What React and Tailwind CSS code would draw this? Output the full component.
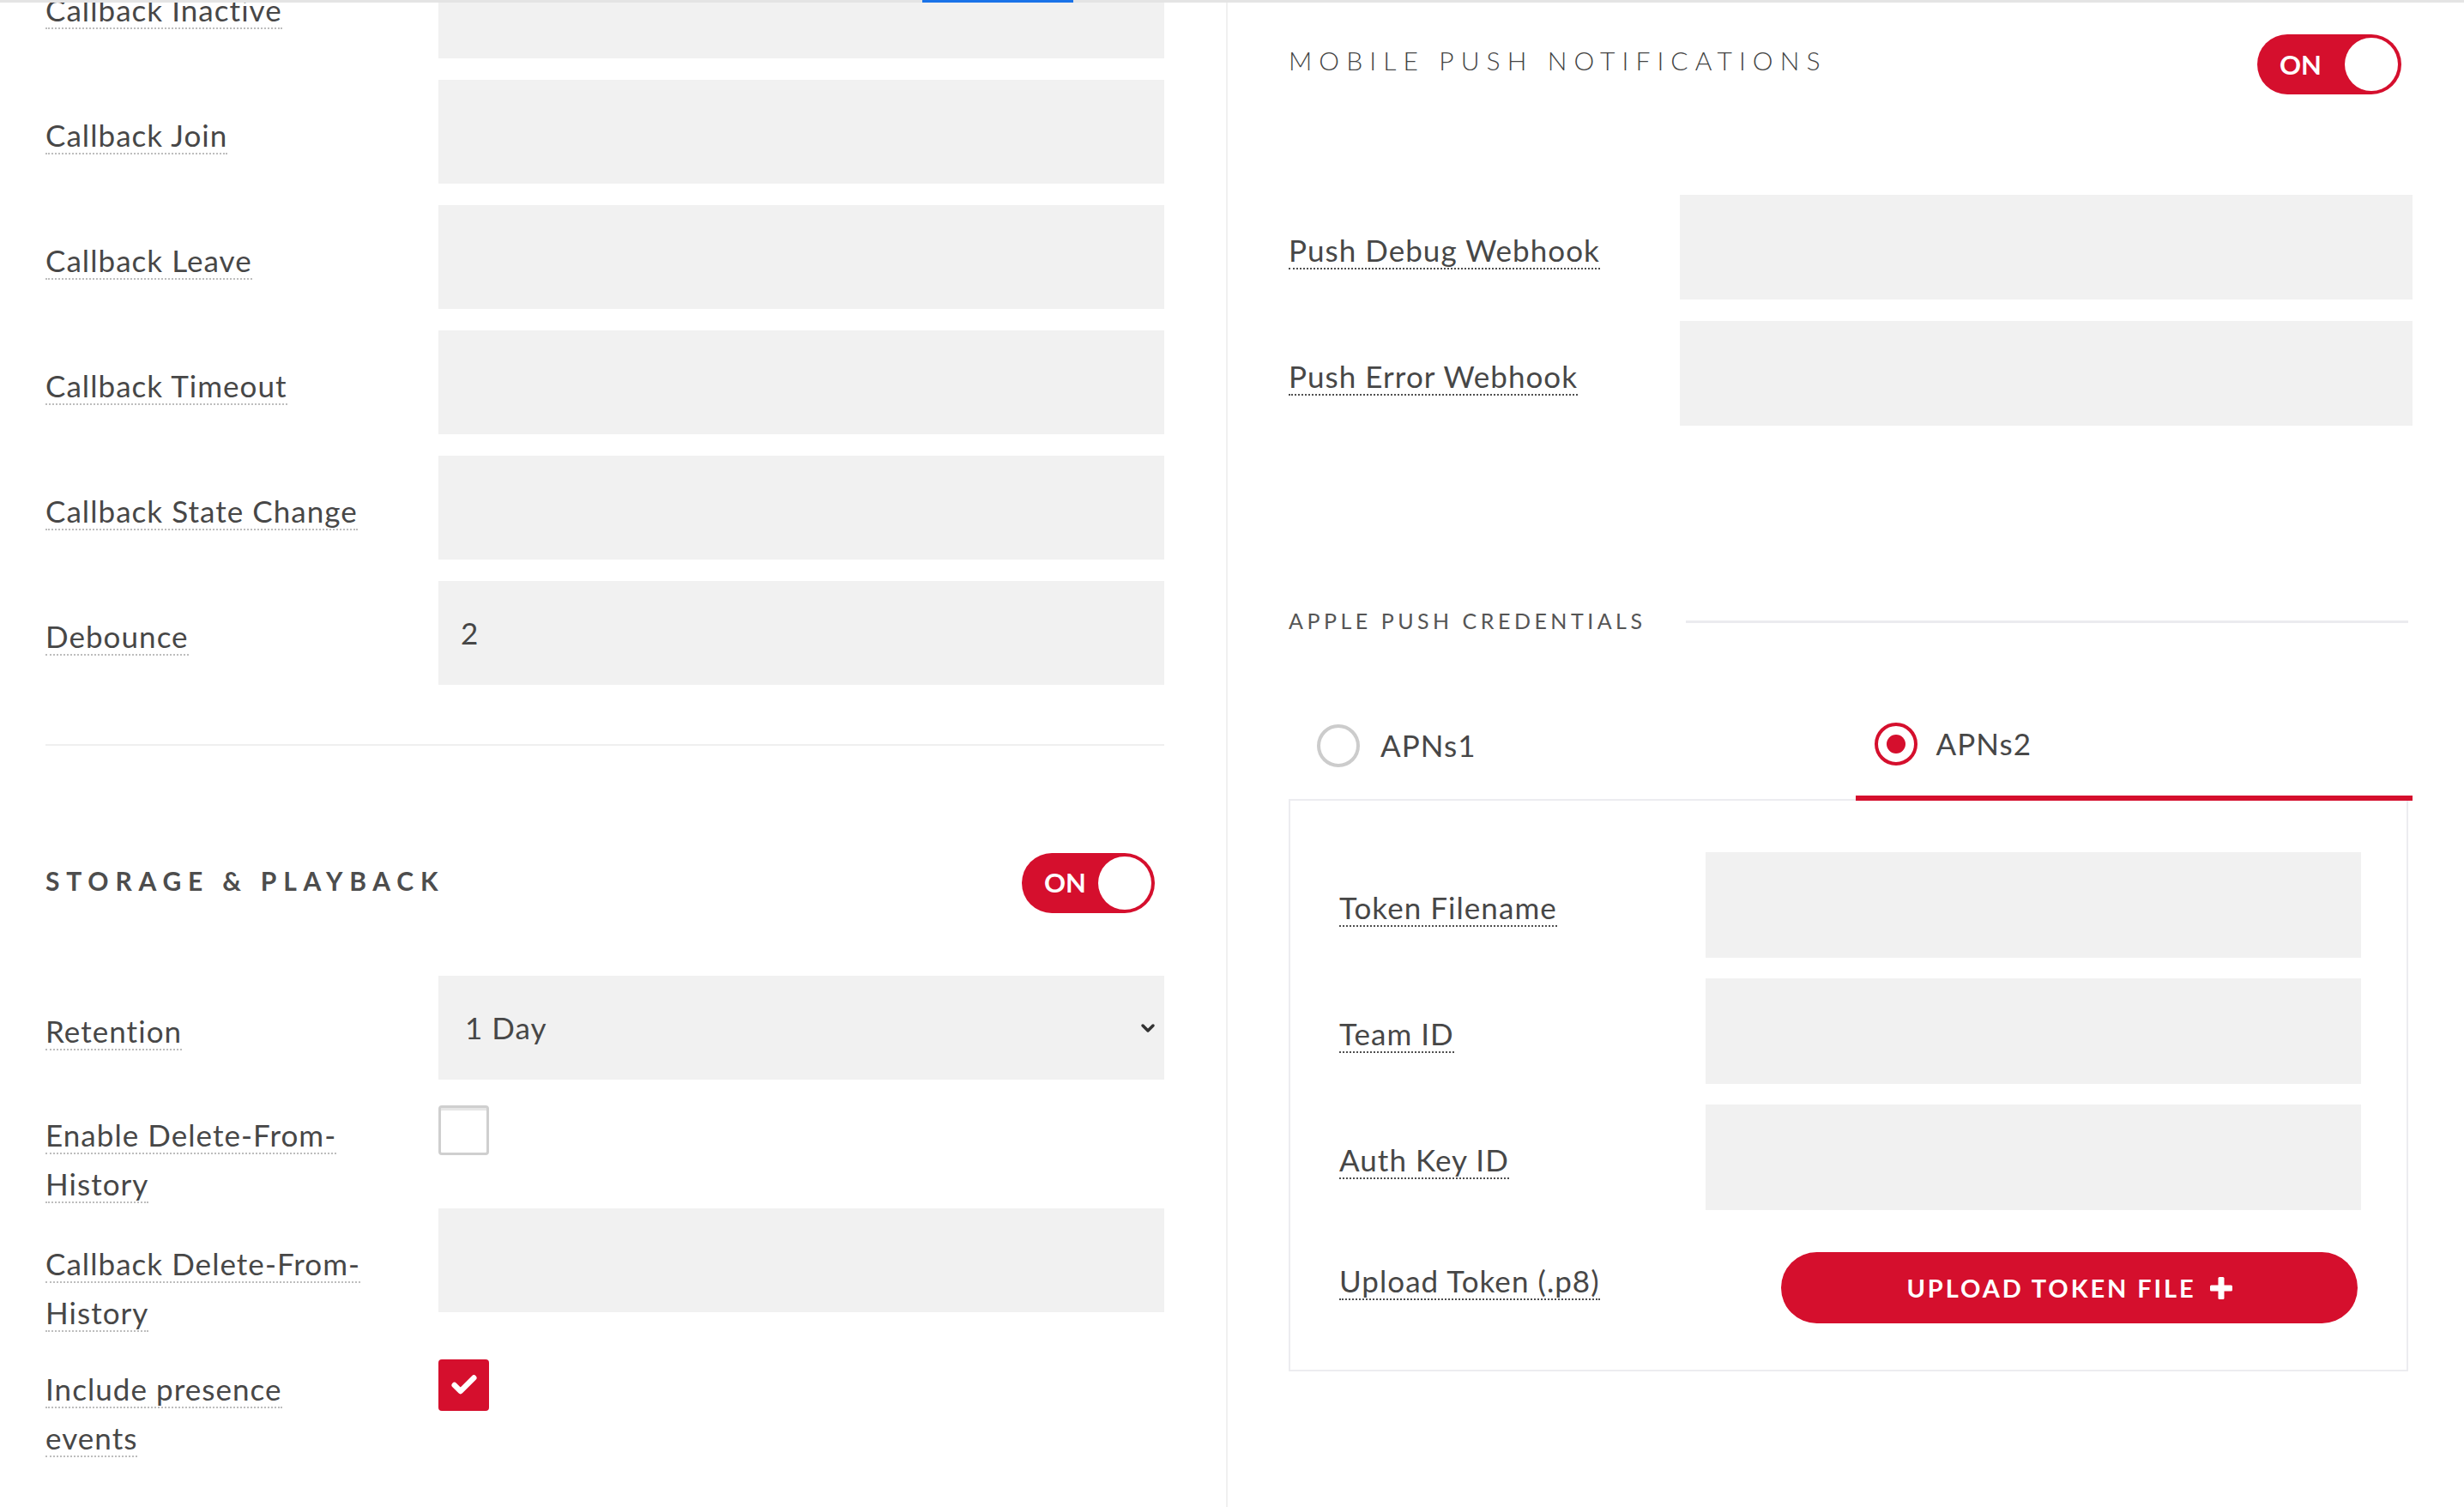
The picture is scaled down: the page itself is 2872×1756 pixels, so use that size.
import React from "react";
import { Check, ChevronDown } from "lucide-react";

const RED = "bg-[#d50f2d]";

function Label({ lines, dark, pt = "pt-[36px]" }) {
  return (
    <div className={`${pt} whitespace-nowrap text-[35px] leading-[57px] tracking-[0.03em] text-[#474747]`}>
      {lines.map((line, i) => (
        <div key={i}>
          <span
            className={`border-b-2 border-dotted ${
              dark ? "border-[#4f4f4f]" : "border-[#bdbdbd]"
            }`}
          >
            {line}
          </span>
        </div>
      ))}
    </div>
  );
}

function Box({ children, className = "" }) {
  return (
    <div className={`flex h-[121px] items-center bg-[#f1f1f1] text-[35px] tracking-[0.03em] text-[#474747] ${className}`}>
      {children}
    </div>
  );
}

function Toggle({ width }) {
  return (
    <div className={`flex h-[70px] items-center justify-between rounded-full ${RED} pl-[26px] pr-[4px] ${width}`}>
      <span className="text-[31px] font-bold text-white">ON</span>
      <span className="h-[62px] w-[62px] rounded-full bg-white" />
    </div>
  );
}

function LeftRow({ label, className = "", children }) {
  return (
    <div className={`grid grid-cols-[458px_846px] ${className}`}>
      <Label lines={label} />
      {children}
    </div>
  );
}

function PlusIcon() {
  return (
    <svg width="26" height="26" viewBox="0 0 26 26" className="ml-[16px]">
      <rect x="9.5" y="0" width="7" height="26" rx="1.5" fill="white" />
      <rect x="0" y="9.5" width="26" height="7" rx="1.5" fill="white" />
    </svg>
  );
}

export default function App() {
  return (
    <div className="relative flex h-[1756px] w-[2872px] overflow-hidden bg-white font-['Lato',sans-serif]">
      {/* sticky header edge */}
      <div className="absolute inset-x-0 top-0 z-10 h-[3px] bg-[#e4e4e4]" />
      <div className="absolute left-[1075px] top-0 z-10 h-[3px] w-[176px] bg-[#1a73e8]" />

      {/* left panel */}
      <div className="w-[1431px] shrink-0 border-r-2 border-[#f0f0f0] pl-[53px] pr-[72px]">
        <LeftRow label={["Callback Inactive"]} className="-mt-[53px]">
          <Box />
        </LeftRow>
        <LeftRow label={["Callback Join"]} className="mt-[25px]">
          <Box />
        </LeftRow>
        <LeftRow label={["Callback Leave"]} className="mt-[25px]">
          <Box />
        </LeftRow>
        <LeftRow label={["Callback Timeout"]} className="mt-[25px]">
          <Box />
        </LeftRow>
        <LeftRow label={["Callback State Change"]} className="mt-[25px]">
          <Box />
        </LeftRow>
        <LeftRow label={["Debounce"]} className="mt-[25px]">
          <Box className="pl-[26px]">2</Box>
        </LeftRow>

        <div className="mt-[69px] h-[2px] bg-[#efefef]" />

        <div className="mt-[125px] flex h-[69px] items-center justify-between">
          <h2 className="mb-[4px] text-[30px] font-bold tracking-[0.26em] text-[#4d4d4d]">STORAGE &amp; PLAYBACK</h2>
          <div className="mr-[11px]">
            <Toggle width="w-[155px]" />
          </div>
        </div>

        <LeftRow label={["Retention"]} className="mt-[74px]">
          <Box className="justify-between pl-[31px] pr-[7px]">
            <span>1 Day</span>
            <ChevronDown size={24} strokeWidth={3.5} className="text-[#333]" />
          </Box>
        </LeftRow>

        <LeftRow label={["Enable Delete-From-", "History"]}>
          <div className="pt-[30px]">
            <div className="h-[58px] w-[59px] rounded-[4px] border-[3px] border-[#cfcfcf] bg-white shadow-[inset_0_3px_0_#e6e6e6]" />
          </div>
        </LeftRow>
        <LeftRow label={["Callback Delete-From-", "History"]} className="h-[121px]">
          <Box className="bg-[#ececec]" />
        </LeftRow>
        <LeftRow label={["Include presence", "events"]} className="mt-[25px]">
          <div className="pt-[30px]">
            <div className={`flex h-[60px] w-[59px] items-center justify-center rounded-[4px] ${RED}`}>
              <Check size={34} strokeWidth={4.5} className="text-white" />
            </div>
          </div>
        </LeftRow>
      </div>

      {/* right panel */}
      <div className="flex-1 pl-[71px] pr-[60px]">
        <div className="mt-[40px] flex h-[70px] items-center justify-between">
          <h2 className="mb-[10px] text-[30px] font-light tracking-[0.27em] text-[#444]">MOBILE PUSH NOTIFICATIONS</h2>
          <div className="mr-[13px]">
            <Toggle width="w-[168px]" />
          </div>
        </div>

        <div className="mt-[117px] grid grid-cols-[456px_854px]">
          <Label lines={["Push Debug Webhook"]} dark />
          <Box className="h-[122px]" />
        </div>
        <div className="mt-[25px] grid grid-cols-[456px_854px]">
          <Label lines={["Push Error Webhook"]} dark />
          <Box className="h-[122px]" />
        </div>

        <div className="mt-[213px] mr-[5px] flex h-[30px] items-center">
          <h3 className="text-[25px] font-normal tracking-[0.18em] text-[#555]">APPLE PUSH CREDENTIALS</h3>
          <div className="ml-[46px] h-[3px] flex-1 bg-[#ebebef]" />
        </div>

        <div className="mt-[67px] flex">
          <div className="flex h-[127px] flex-1 items-center gap-[24px] border-b-2 border-[#ececf0] pl-[33px]">
            <span className="h-[50px] w-[50px] rounded-full border-[4px] border-[#cccccc]" />
            <span className="text-[35px] tracking-[0.03em] text-[#474747]">APNs1</span>
          </div>
          <div className="flex h-[127px] flex-1 items-center gap-[22px] border-b-[6px] border-[#d50f2d] pl-[22px]">
            <span className="flex h-[50px] w-[50px] items-center justify-center rounded-full border-[4px] border-[#d50f2d]">
              <span className={`h-[22px] w-[22px] rounded-full ${RED}`} />
            </span>
            <span className="text-[35px] tracking-[0.03em] text-[#474747]">APNs2</span>
          </div>
        </div>

        <div className="mr-[5px] border-2 border-t-0 border-[#ececf0] pb-[54px] pl-[57px] pr-[53px] pt-[60px]">
          <div className="grid grid-cols-[427px_764px]">
            <Label lines={["Token Filename"]} dark />
            <Box className="h-[123px]" />
          </div>
          <div className="mt-[24px] grid grid-cols-[427px_764px]">
            <Label lines={["Team ID"]} dark />
            <Box className="h-[123px]" />
          </div>
          <div className="mt-[24px] grid grid-cols-[427px_764px]">
            <Label lines={["Auth Key ID"]} dark />
            <Box className="h-[123px]" />
          </div>
          <div className="mt-[25px] grid grid-cols-[427px_764px]">
            <Label lines={["Upload Token (.p8)"]} dark pt="pt-[29px]" />
            <div className="pt-[24px]">
              <button
                type="button"
                className={`ml-auto mr-[4px] flex h-[83px] w-[672px] items-center justify-center rounded-full ${RED} text-[29px] font-bold tracking-[0.1em] text-white`}
              >
                UPLOAD TOKEN FILE
                <PlusIcon />
              </button>
            </div>
          </div>
        </div>
      </div>
    </div>
  );
}
